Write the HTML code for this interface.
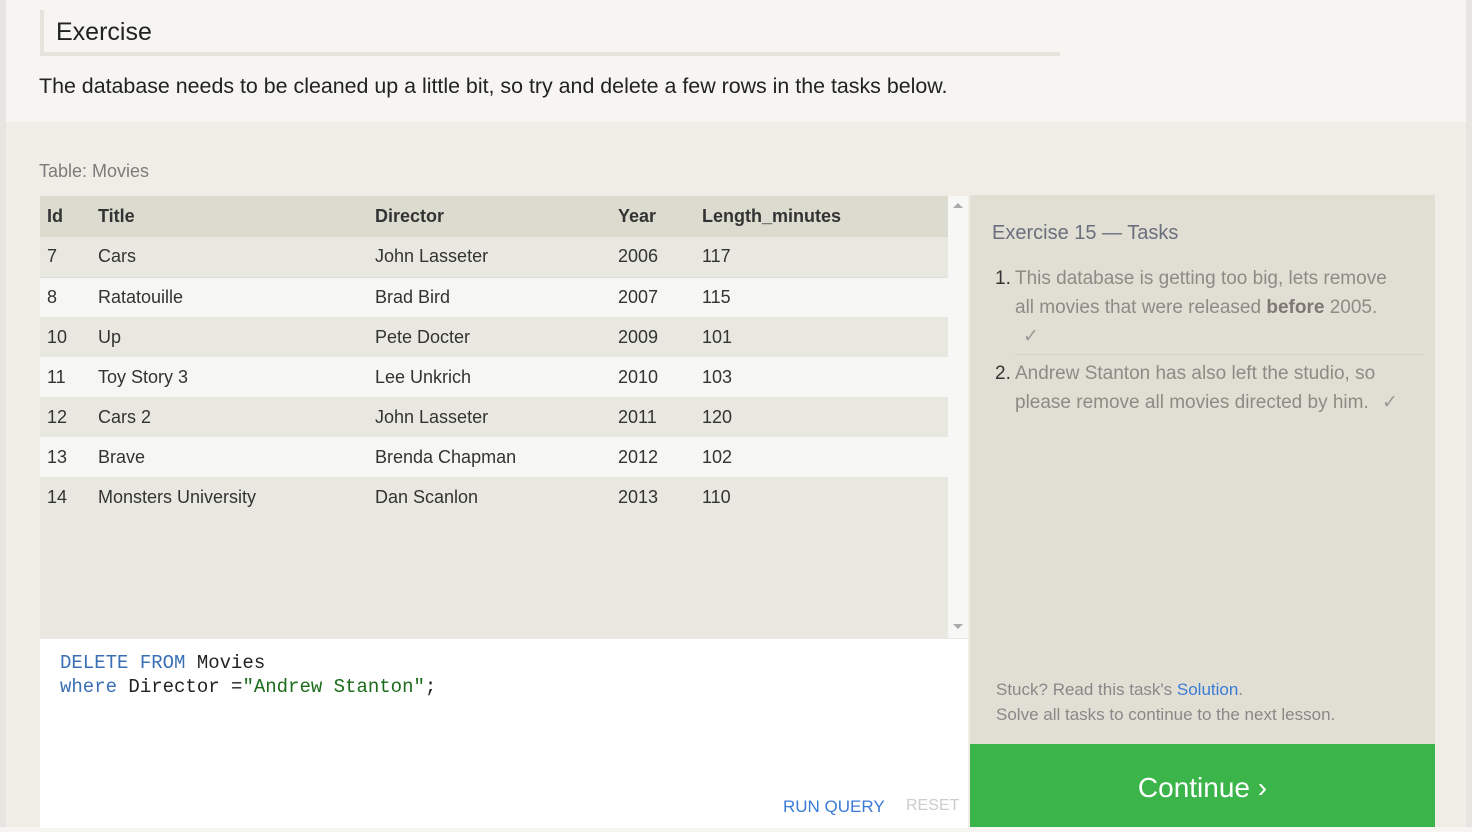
<!DOCTYPE html>
<html><head><style>
body{margin:0;width:1472px;height:827px;overflow:hidden;background:#f6f5f1;font-family:"Liberation Sans",sans-serif;position:relative}
.a{position:absolute}
td,th{padding:0;text-align:left}
</style></head><body>
<div class="a" style="left:0;top:0;width:6px;height:827px;background:#e6e5e2"></div>
<div class="a" style="left:1466px;top:0;width:6px;height:827px;background:#e6e5e2"></div>
<div class="a" style="left:40px;top:10px;width:1020px;height:46px;border-left:4px solid #e4e3dc;border-bottom:4px solid #e4e3dc;box-sizing:border-box"></div>
<div class="a" style="left:56px;top:18px;font-size:25px;color:#222">Exercise</div>
<div class="a" style="left:39px;top:74px;font-size:21.4px;color:#222">The database needs to be cleaned up a little bit, so try and delete a few rows in the tasks below.</div>
<div class="a" style="left:6px;top:122px;width:1460px;height:705px;background:#efede6"></div>
<div class="a" style="left:39px;top:161px;font-size:18px;color:#7b7b7b">Table: Movies</div>
<div class="a" style="left:40px;top:196px;width:908px;height:442px;background:#e9e8e0"></div>
<div class="a" style="left:948px;top:196px;width:20px;height:442px;background:#f7f7f5"></div>
<div class="a" style="left:953px;top:203px;border:5px solid transparent;border-bottom:5px solid #aaa;border-top:0"></div>
<div class="a" style="left:953px;top:624px;border:5px solid transparent;border-top:5px solid #aaa;border-bottom:0"></div>
<table class="a" style="left:40px;top:196px;width:908px;border-collapse:collapse;font-size:18px;color:#333">
<tr style="height:41px;background:#dcdbd0;font-weight:bold"><th style="padding-left:7px;width:51px">Id</th><th style="width:277px">Title</th><th style="width:243px">Director</th><th style="width:84px">Year</th><th>Length_minutes</th></tr>
<tr style="height:40px;background:#e9e8e0"><td style="padding-left:7px">7</td><td>Cars</td><td>John Lasseter</td><td>2006</td><td>117</td></tr>
<tr style="height:40px;background:#f6f6f3;border-top:1px solid #ddd"><td style="padding-left:7px">8</td><td>Ratatouille</td><td>Brad Bird</td><td>2007</td><td>115</td></tr>
<tr style="height:40px;background:#e9e8e0"><td style="padding-left:7px">10</td><td>Up</td><td>Pete Docter</td><td>2009</td><td>101</td></tr>
<tr style="height:40px;background:#f6f6f3"><td style="padding-left:7px">11</td><td>Toy Story 3</td><td>Lee Unkrich</td><td>2010</td><td>103</td></tr>
<tr style="height:40px;background:#e9e8e0"><td style="padding-left:7px">12</td><td>Cars 2</td><td>John Lasseter</td><td>2011</td><td>120</td></tr>
<tr style="height:40px;background:#f6f6f3"><td style="padding-left:7px">13</td><td>Brave</td><td>Brenda Chapman</td><td>2012</td><td>102</td></tr>
<tr style="height:40px;background:#e9e8e0"><td style="padding-left:7px">14</td><td>Monsters University</td><td>Dan Scanlon</td><td>2013</td><td>110</td></tr>
</table>
<div class="a" style="left:40px;top:638px;width:928px;height:189px;background:#fff;border-top:1px solid #e6e6e6"></div>
<div class="a" style="left:60px;top:651px;font-family:'Liberation Mono',monospace;font-size:19px;line-height:24px;color:#222;white-space:pre"><span style="color:#3a6fb5">DELETE FROM</span> Movies
<span style="color:#3a6fb5">where</span> Director =<span style="color:#1a6b1a">"Andrew Stanton"</span>;</div>
<div class="a" style="left:783px;top:797px;font-size:17px;color:#3a7bd5">RUN QUERY</div>
<div class="a" style="left:906px;top:797px;font-size:16px;color:#ccc">RESET</div>
<div class="a" style="left:970px;top:195px;width:465px;height:549px;background:#e1dfd4"></div>
<div class="a" style="left:992px;top:222px;font-size:20px;color:#6a6f7d">Exercise 15 — Tasks</div>
<div class="a" style="left:995px;top:264px;width:410px;font-size:19px;line-height:29px;color:#8e8a85">
<div style="position:relative;padding-left:20px"><span style="position:absolute;left:0;color:#333">1.</span>This database is getting too big, lets remove all movies that were released <b style="color:#7d7874">before</b> 2005.<br><span style="padding-left:8px;color:#999">✓</span></div>
<div style="border-top:1px solid #d4d2c7;margin:3px 0 0 20px;width:408px"></div>
<div style="position:relative;padding-left:20px;margin-top:4px"><span style="position:absolute;left:0;color:#333">2.</span>Andrew Stanton has also left the studio, so please remove all movies directed by him. <span style="padding-left:8px;color:#999">✓</span></div>
</div>
<div class="a" style="left:996px;top:677px;font-size:17px;line-height:25px;color:#888">Stuck? Read this task's <span style="color:#3a7bd5">Solution</span>.<br>Solve all tasks to continue to the next lesson.</div>
<div class="a" style="left:970px;top:744px;width:465px;height:83px;background:#3bb44a;color:#fff;font-size:28px;text-align:center;line-height:88px">Continue ›</div>
</body></html>
